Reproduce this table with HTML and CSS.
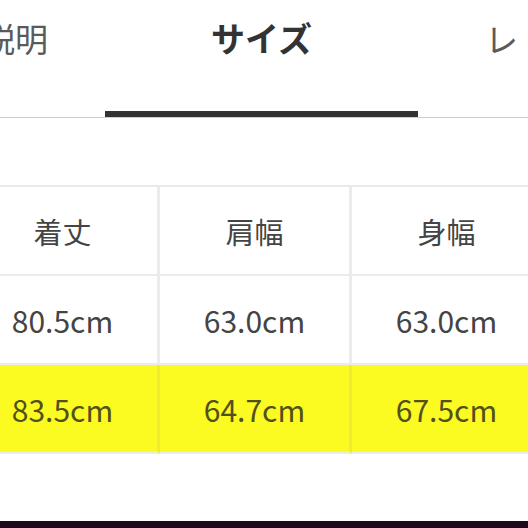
FILE: index.html
```html
<!DOCTYPE html>
<html lang="ja">
<head>
<meta charset="utf-8">
<link rel="stylesheet" href="styles.css">
</head>
<body>
<div class="page">
  <nav class="tabs">
    <div class="tab tab-first">商品説明</div>
    <div class="tab tab-active">サイズ</div>
    <div class="tab tab-last"><span class="tab-last-text">レビュー</span></div>
  </nav>
  <div class="content">
    <div class="size-table">
      <div class="cell head">着丈</div>
      <div class="cell head">肩幅</div>
      <div class="cell head">身幅</div>
      <div class="cell">80.5cm</div>
      <div class="cell">63.0cm</div>
      <div class="cell">63.0cm</div>
      <div class="cell hl">83.5cm</div>
      <div class="cell hl">64.7cm</div>
      <div class="cell hl">67.5cm</div>
    </div>
  </div>
  <div class="bottom-bar"></div>
</div>
</body>
</html>
```

FILE: styles.css
```css
html, body {
  margin: 0;
  padding: 0;
  background: #ffffff;
}
body {
  width: 528px;
  height: 528px;
  overflow: hidden;
  font-family: "Noto Sans CJK JP", "Noto Sans", sans-serif;
  color: #333333;
}
.page {
  width: 528px;
  height: 528px;
  display: flex;
  flex-direction: column;
  overflow: hidden;
}
.tabs {
  display: flex;
  align-items: stretch;
  height: 117px;
  border-bottom: 1px solid #cfcfcf;
  margin-left: -84px;
  flex-shrink: 0;
}
.tab {
  font-size: 33px;
  line-height: 76px;
  white-space: nowrap;
  color: #5a5a5a;
  flex-shrink: 0;
}
.tab-first {
  width: 132px;
  margin-right: 57px;
}
.tab-active {
  width: 313px;
  text-align: center;
  font-weight: 700;
  font-size: 34px;
  color: #333333;
  box-sizing: border-box;
  border-bottom: 6px solid #333333;
}
.tab-last {
  margin-left: 67px;
  width: 34px;
  overflow: hidden;
}
.content {
  flex: 1;
  padding-top: 67px;
}
.size-table {
  display: grid;
  grid-template-columns: 192px 192px 192px;
  grid-auto-rows: 89px;
  margin-left: -32px;
  border-top: 2px solid #e9e9e9;
}
.cell {
  display: flex;
  align-items: center;
  justify-content: center;
  font-size: 30px;
  color: #444444;
  border-right: 3px solid #ebebeb;
  border-bottom: 2px solid #ebebeb;
}
.head {
  font-size: 29px;
}
.hl {
  background: #fbfb22;
  color: #52501c;
  border-right-color: #eeec3a;
  border-bottom-color: #ececec;
}
.bottom-bar {
  height: 7px;
  background: #1c0a1c;
  flex-shrink: 0;
}
```
